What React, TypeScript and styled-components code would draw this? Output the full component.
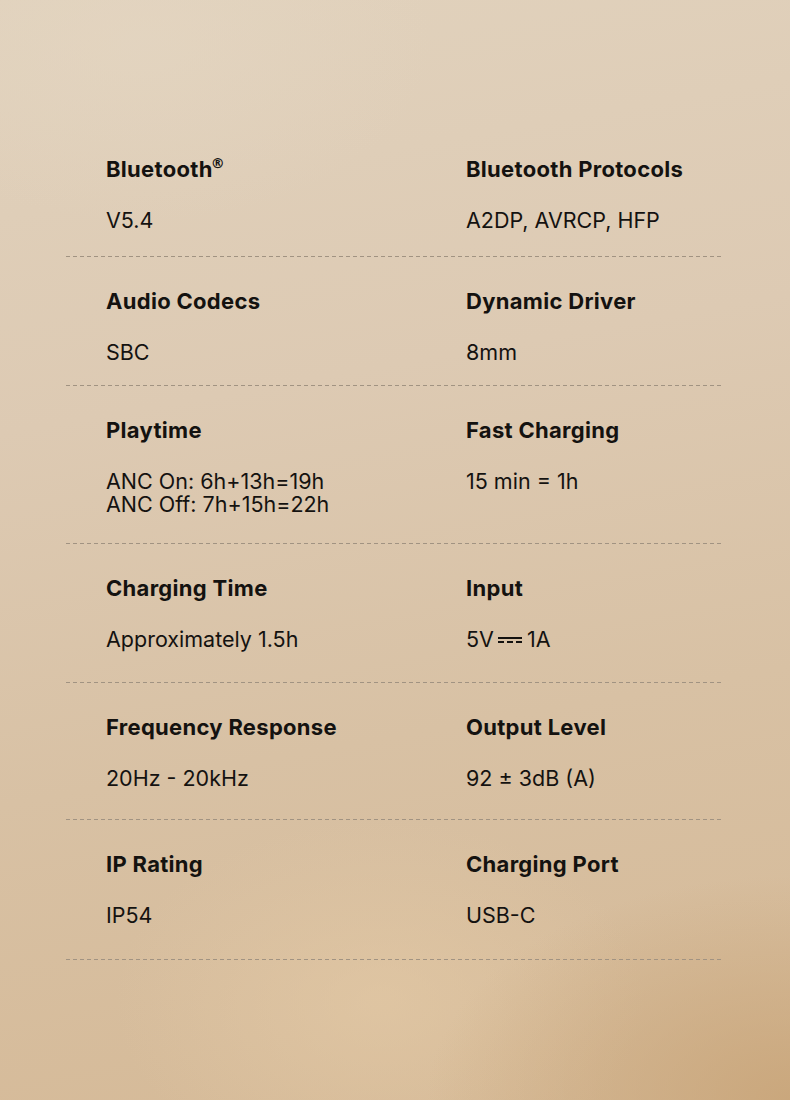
import styled, { createGlobalStyle } from "styled-components";

const GlobalStyle = createGlobalStyle`
  html, body {
    margin: 0;
    padding: 0;
  }
  body {
    font-family: Inter, "Noto Sans", "Liberation Sans", sans-serif;
    color: #141210;
  }
`;

const Page = styled.div`
  width: 790px;
  height: 1100px;
  overflow: hidden;
  box-sizing: border-box;
  padding: 125px 66px 0 66px;
  background:
    radial-gradient(ellipse 420px 260px at 140px 40px, rgba(228, 214, 194, 0.6), transparent 70%),
    radial-gradient(ellipse 520px 320px at 790px 1100px, rgba(200, 164, 120, 0.85), transparent 70%),
    radial-gradient(ellipse 380px 260px at 380px 1000px, rgba(228, 202, 166, 0.6), transparent 70%),
    linear-gradient(170deg, #e1d2bd 0%, #ddcab3 35%, #d8c1a4 65%, #d5b996 100%);
`;

const SpecList = styled.div`
  display: flex;
  flex-direction: column;
`;

const Row = styled.div<{ $pb: number }>`
  display: grid;
  grid-template-columns: 360px 1fr;
  padding: 31px 0 ${(p) => p.$pb}px 40px;
  background-image: repeating-linear-gradient(
    to right,
    #a19382 0 4px,
    transparent 4px 7px
  );
  background-size: 100% 1px;
  background-repeat: no-repeat;
  background-position: left bottom;
`;

const Cell = styled.div`
  display: flex;
  flex-direction: column;
`;

const Title = styled.div`
  font-size: 22px;
  font-weight: 700;
  line-height: 26px;
  letter-spacing: 0.3px;
  margin-bottom: 27px;
  sup {
    font-family: "DejaVu Sans", sans-serif;
    font-size: 14px;
    font-weight: 700;
    vertical-align: 9px;
    line-height: 0;
    margin-left: -2px;
  }
`;

const Value = styled.div`
  font-size: 21.5px;
  font-weight: 400;
  line-height: 23px;
`;

const Line = styled.span`
  display: flex;
  align-items: center;
`;

const DcSign = () => (
  <svg width="24" height="6" viewBox="0 0 24 6" style={{ margin: "0 5px 0 4px" }}>
    <rect x="0" y="0" width="24" height="2" fill="#141210" />
    <rect x="0" y="4" width="6" height="2" fill="#141210" />
    <rect x="9" y="4" width="6" height="2" fill="#141210" />
    <rect x="18" y="4" width="6" height="2" fill="#141210" />
  </svg>
);

interface Spec {
  title: React.ReactNode;
  values: React.ReactNode[];
}

const rows: { pb: number; left: Spec; right: Spec }[] = [
  {
    pb: 25,
    left: { title: <>Bluetooth<sup>®</sup></>, values: ["V5.4"] },
    right: { title: "Bluetooth Protocols", values: ["A2DP, AVRCP, HFP"] },
  },
  {
    pb: 22,
    left: { title: "Audio Codecs", values: ["SBC"] },
    right: { title: "Dynamic Driver", values: ["8mm"] },
  },
  {
    pb: 28,
    left: {
      title: "Playtime",
      values: ["ANC On: 6h+13h=19h", "ANC Off: 7h+15h=22h"],
    },
    right: { title: "Fast Charging", values: ["15 min = 1h"] },
  },
  {
    pb: 32,
    left: { title: "Charging Time", values: ["Approximately 1.5h"] },
    right: { title: "Input", values: [<>5V<DcSign />1A</>] },
  },
  {
    pb: 30,
    left: { title: "Frequency Response", values: ["20Hz - 20kHz"] },
    right: { title: "Output Level", values: ["92 ± 3dB (A)"] },
  },
  {
    pb: 33,
    left: { title: "IP Rating", values: ["IP54"] },
    right: { title: "Charging Port", values: ["USB-C"] },
  },
];

function SpecCell({ spec }: { spec: Spec }) {
  return (
    <Cell>
      <Title>{spec.title}</Title>
      <Value>
        {spec.values.map((v, i) => (
          <Line key={i}>{v}</Line>
        ))}
      </Value>
    </Cell>
  );
}

function App() {
  return (
    <Page>
      <GlobalStyle />
      <SpecList>
        {rows.map((r, i) => (
          <Row key={i} $pb={r.pb}>
            <SpecCell spec={r.left} />
            <SpecCell spec={r.right} />
          </Row>
        ))}
      </SpecList>
    </Page>
  );
}

export default App;
